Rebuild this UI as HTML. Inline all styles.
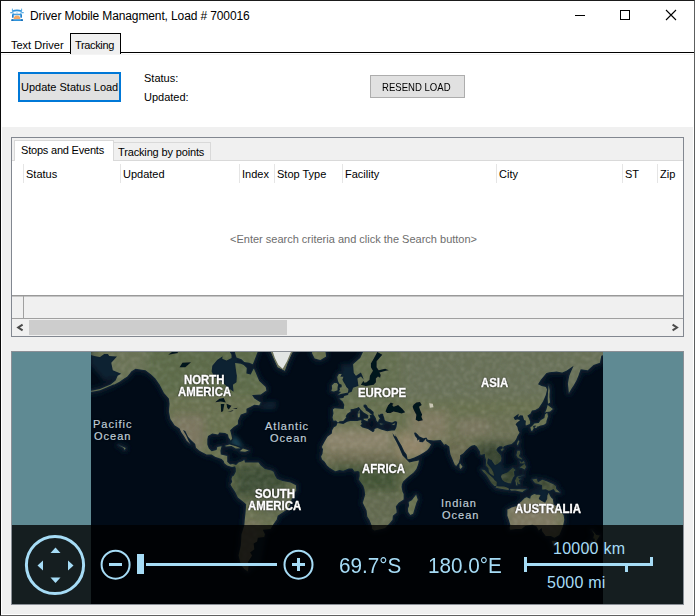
<!DOCTYPE html>
<html><head><meta charset="utf-8">
<style>
*{margin:0;padding:0;box-sizing:border-box}
html,body{width:695px;height:616px;overflow:hidden;background:#fff}
body{position:relative;font-family:"Liberation Sans",sans-serif;font-size:11px;color:#000}
.a{position:absolute}
.t{position:absolute;white-space:nowrap;line-height:1}
.lbl{position:absolute;white-space:nowrap;line-height:1;font-weight:bold;color:#fff;font-size:12px;transform:scaleX(.95);transform-origin:0 0;-webkit-text-stroke:0.35px #fff;text-shadow:0 0 2px #000,0 0 1px #000}
.ocn{position:absolute;white-space:nowrap;line-height:1;font-weight:normal;color:#bfccd8;font-size:11px;letter-spacing:1px;-webkit-text-stroke:0.2px #bfccd8;text-shadow:0 0 2px #000}
.hs{position:absolute;top:164px;width:1px;height:19px;background:#e5e5e5}
</style></head>
<body>
<!-- window frame -->
<div class="a" style="left:0;top:0;width:695px;height:616px;background:#f0f0f0;border:1px solid #1b1b1b;border-left-color:#0a0a0a;border-right-color:#5c5e5e;border-bottom-color:#606060"></div>
<div class="a" style="left:1px;top:1px;width:693px;height:126px;background:#fff"></div>
<div class="a" style="left:1px;top:614px;width:693px;height:1px;background:#fff"></div>
<div class="a" style="left:1px;top:127px;width:1px;height:487px;background:#fff"></div>
<div class="a" style="left:693px;top:127px;width:1px;height:487px;background:#fff"></div>

<!-- title bar -->
<svg class="a" style="left:6px;top:4px" width="24" height="20" viewBox="6 4 24 20">
 <path d="M12.3 11.2 Q17 9.6 21.7 11.2" fill="none" stroke="#2f93da" stroke-width="1.6"/>
 <rect x="11.9" y="8.6" width="0.9" height="2.4" fill="#4aa6e2"/>
 <rect x="21.2" y="8.6" width="0.9" height="2.4" fill="#4aa6e2"/>
 <rect x="10.2" y="12" width="2" height="1.3" rx="0.5" fill="#58ace4"/>
 <rect x="21.8" y="12" width="2" height="1.3" rx="0.5" fill="#58ace4"/>
 <path d="M12.6 11.5 L13.2 14.2 L20.8 14.2 L21.4 11.5" fill="none" stroke="#2f93da" stroke-width="0.9"/>
 <rect x="16.6" y="12" width="0.8" height="1.8" fill="#8cc8ee"/>
 <path d="M12.3 14 Q17 14.8 21.7 14 L21.7 14.9 Q17 15.7 12.3 14.9Z" fill="#2f93da"/>
 <rect x="12" y="14.5" width="1.7" height="3.3" rx="0.6" fill="#1f7fcc"/>
 <rect x="20.3" y="14.5" width="1.7" height="3.3" rx="0.6" fill="#1f7fcc"/>
 <path d="M13.6 19.3 A3.4 3.9 0 0 1 20.4 19.3Z" fill="#f2a866"/>
 <rect x="11.4" y="19.2" width="11.5" height="1.8" rx="0.6" fill="#2f93da"/>
 <rect x="11.4" y="19.2" width="2" height="1.8" rx="0.6" fill="#1a6fb8"/>
 <rect x="20.9" y="19.2" width="2" height="1.8" rx="0.6" fill="#1a6fb8"/>
</svg>
<div class="t" style="left:30px;top:10px;font-size:12px;letter-spacing:-0.12px">Driver Mobile Managment, Load # 700016</div>
<div class="a" style="left:575px;top:15px;width:10px;height:1px;background:#000"></div>
<div class="a" style="left:620px;top:10px;width:10px;height:10px;border:1px solid #000"></div>
<svg class="a" style="left:665px;top:9px" width="12" height="12"><path d="M1 1 L11 11 M11 1 L1 11" stroke="#000" stroke-width="1.1"/></svg>

<!-- outer tabs -->
<div class="a" style="left:1px;top:52px;width:693px;height:1px;background:#000"></div>
<div class="a" style="left:1px;top:54px;width:693px;height:1px;background:#f4f4f4"></div>
<div class="a" style="left:70px;top:33px;width:51px;height:21px;background:#f0f0f0;border:1px solid #000;border-bottom:none"></div>
<div class="t" style="left:11px;top:40px">Text Driver</div>
<div class="t" style="left:75px;top:40px;letter-spacing:-0.35px">Tracking</div>

<!-- top panel -->
<div class="a" style="left:18px;top:72px;width:103px;height:30px;background:#e1e1e1;border:2px solid #0078d7"></div>
<div class="t" style="left:21px;top:82px">Update Status Load</div>
<div class="t" style="left:144px;top:73px">Status:</div>
<div class="t" style="left:144px;top:92px">Updated:</div>
<div class="a" style="left:370px;top:75px;width:95px;height:23px;background:#e1e1e1;border:1px solid #adadad"></div>
<div class="t" style="left:382px;top:82px;font-size:11px;transform:scaleX(0.87);transform-origin:0 0">RESEND LOAD</div>

<!-- grid tab control -->
<div class="a" style="left:11px;top:137px;width:673px;height:200px;border:1px solid #828790;background:#f0f0f0"></div>
<div class="a" style="left:12px;top:160px;width:671px;height:136px;background:#fff;border-top:1px solid #d9d9d9"></div>
<div class="a" style="left:14px;top:140px;width:100px;height:21px;background:#fff;border:1px solid #d9d9d9;border-bottom:none"></div>
<div class="a" style="left:114px;top:142px;width:97px;height:18px;background:#f0f0f0;border:1px solid #d9d9d9;border-bottom:none;border-left:none"></div>
<div class="t" style="left:21px;top:145px;letter-spacing:-0.2px">Stops and Events</div>
<div class="t" style="left:118px;top:147px;letter-spacing:-0.15px">Tracking by points</div>
<div class="hs" style="left:23px"></div>
<div class="hs" style="left:120px"></div>
<div class="hs" style="left:239px"></div>
<div class="hs" style="left:274px"></div>
<div class="hs" style="left:342px"></div>
<div class="hs" style="left:496px"></div>
<div class="hs" style="left:622px"></div>
<div class="hs" style="left:657px"></div>
<div class="t" style="left:26px;top:169px">Status</div>
<div class="t" style="left:123px;top:169px">Updated</div>
<div class="t" style="left:242px;top:169px">Index</div>
<div class="t" style="left:277px;top:169px">Stop Type</div>
<div class="t" style="left:345px;top:169px">Facility</div>
<div class="t" style="left:499px;top:169px">City</div>
<div class="t" style="left:625px;top:169px">ST</div>
<div class="t" style="left:660px;top:169px">Zip</div>
<div class="t" style="left:230px;top:234px;color:#6d6d6d;">&lt;Enter search criteria and click the Search button&gt;</div>
<!-- footer + scrollbar -->
<div class="a" style="left:12px;top:295px;width:671px;height:1px;background:#999"></div><div class="a" style="left:12px;top:296px;width:671px;height:1px;background:#c4c4c4"></div>
<div class="a" style="left:23px;top:296px;width:1px;height:22px;background:#a0a0a0"></div>
<div class="a" style="left:12px;top:318px;width:671px;height:1px;background:#a0a0a0"></div>
<div class="a" style="left:29px;top:320px;width:258px;height:15px;background:#cdcdcd"></div>
<svg class="a" style="left:15px;top:322px" width="10" height="10"><path d="M7.6 2.6 L3.2 5.5 L7.6 8.4" fill="none" stroke="#4a4a4a" stroke-width="2"/></svg>
<svg class="a" style="left:670px;top:322px" width="10" height="10"><path d="M2.6 2.6 L7 5.5 L2.6 8.4" fill="none" stroke="#4a4a4a" stroke-width="2"/></svg>

<!-- map -->
<div class="a" style="left:11px;top:351px;width:673px;height:254px;border:1px solid #8a8f96"></div>
<svg width="695" height="616" style="position:absolute;left:0;top:0">
<defs>
<clipPath id="mc"><rect x="91" y="352" width="512" height="252"/></clipPath>
<clipPath id="lc"><path d="M107.1,279.0 L107.1,352.7 L109.2,356.1 L117.0,356.4 L111.3,362.8 L112.8,370.2 L121.3,373.8 L117.7,375.7 L115.6,380.4 L112.0,383.4 L109.9,385.2 L114.2,384.4 L119.9,381.4 L124.1,378.6 L127.0,376.8 L129.8,373.5 L131.2,371.6 L135.5,368.8 L145.5,370.2 L151.2,374.4 L155.4,378.4 L159.7,384.7 L164.0,392.9 L168.9,398.4 L169.6,403.7 L168.9,411.6 L170.4,419.0 L174.6,425.2 L179.6,428.6 L181.3,432.2 L183.9,436.0 L186.7,440.8 L190.3,443.9 L188.8,441.5 L186.0,435.2 L182.9,429.9 L185.3,431.1 L188.1,436.8 L191.0,440.0 L195.2,443.9 L196.0,447.7 L199.5,450.7 L206.6,454.4 L211.6,454.4 L215.2,456.7 L221.6,458.9 L223.7,461.0 L224.4,463.2 L227.2,465.4 L232.2,467.1 L235.8,466.1 L236.1,465.1 L232.9,463.9 L230.1,464.6 L227.2,461.8 L227.2,455.9 L220.8,454.4 L220.4,450.7 L221.6,446.2 L217.3,446.9 L216.6,450.0 L211.6,451.2 L208.8,448.5 L207.3,444.6 L207.3,439.2 L208.0,436.0 L212.3,433.6 L218.0,434.4 L219.4,432.4 L225.1,433.1 L228.0,434.4 L228.7,437.6 L230.8,440.4 L232.2,438.4 L230.8,432.7 L230.1,430.3 L233.6,426.9 L237.9,424.3 L237.9,420.8 L240.8,414.4 L246.4,412.5 L246.4,408.7 L250.7,406.7 L254.3,404.7 L259.2,405.3 L260.7,402.6 L254.3,398.4 L252.1,395.1 L260.7,394.5 L266.4,390.6 L265.6,387.1 L259.2,380.9 L254.3,369.6 L253.6,368.8 L250.7,374.4 L246.4,373.5 L246.7,367.9 L243.6,364.9 L240.8,363.7 L235.1,363.1 L235.8,368.8 L236.9,375.7 L236.5,382.2 L232.9,384.7 L233.6,391.8 L229.4,388.8 L222.3,382.2 L214.4,377.0 L211.6,371.6 L212.3,365.8 L217.3,359.7 L222.3,356.4 L223.7,351.3 L223.7,279.0Z"/><path d="M258.5,349.5 L254.3,360.6 L252.8,364.3 L249.3,362.8 L244.3,361.9 L241.5,359.3 L236.5,357.4 L235.1,353.0 L229.4,279.0 L258.5,279.0Z"/><path d="M231.5,358.0 L226.5,360.6 L222.3,358.7 L223.0,351.3 L229.4,351.3 L231.5,354.7Z"/><path d="M284.8,370.8 L277.7,367.3 L273.5,358.0 L269.9,349.5 L266.4,279.0 L317.6,279.0 L317.6,336.1 L300.5,344.0 L292.0,353.0 L287.7,362.8Z"/><path d="M311.9,353.0 L314.7,358.4 L320.4,360.0 L326.1,356.4 L325.4,351.3 L313.3,349.5Z"/><path d="M235.8,465.4 L238.6,462.5 L242.2,461.3 L244.3,459.9 L245.0,462.5 L249.3,462.5 L255.0,462.5 L258.5,462.5 L260.7,465.4 L264.9,469.0 L271.3,470.4 L273.5,471.8 L274.9,475.4 L277.0,478.9 L282.7,481.1 L290.5,482.5 L295.9,485.3 L296.2,490.4 L292.7,495.4 L290.5,502.8 L288.4,508.8 L284.8,511.1 L277.7,515.8 L276.6,519.8 L273.5,523.9 L270.6,529.0 L262.8,529.8 L264.9,534.2 L264.2,536.9 L257.8,537.8 L257.1,541.5 L253.6,543.4 L254.3,549.3 L250.0,552.4 L252.1,555.5 L247.9,562.1 L248.6,565.5 L247.9,571.6 L244.3,569.1 L240.8,564.4 L238.6,555.5 L240.8,545.4 L241.5,534.2 L244.3,525.6 L245.0,517.4 L245.7,511.1 L246.2,504.3 L243.6,502.0 L237.9,497.6 L235.1,491.8 L232.2,487.5 L230.5,484.6 L232.2,481.8 L231.5,478.9 L232.2,476.4 L233.9,475.4 L235.8,471.8 L235.8,468.2 L235.1,466.8Z"/><path d="M225.1,445.7 L229.4,444.5 L235.8,446.2 L240.6,448.2 L235.8,448.6 L231.5,445.9 L225.8,446.6Z"/><path d="M240.0,450.9 L242.9,448.6 L248.9,450.6 L245.0,451.8 L240.3,451.2Z"/><path d="M353.1,279.0 L365.9,345.9 L360.2,358.0 L353.1,364.3 L353.8,373.0 L356.0,375.7 L360.9,372.4 L362.4,375.7 L363.8,379.7 L360.9,376.5 L357.4,378.4 L358.1,383.4 L358.5,386.1 L353.1,387.8 L351.7,391.8 L348.6,392.9 L348.1,395.1 L344.3,396.0 L343.4,398.0 L339.3,398.6 L342.7,401.4 L344.3,404.7 L343.7,408.9 L334.6,408.3 L332.9,409.6 L333.5,413.5 L332.5,417.5 L333.5,420.8 L336.0,420.4 L337.5,422.2 L338.2,422.6 L339.6,421.3 L343.2,421.1 L345.3,418.6 L346.3,417.2 L345.6,416.3 L347.4,413.5 L350.6,411.6 L350.6,409.2 L353.1,408.9 L356.7,408.1 L358.8,406.9 L360.9,409.8 L363.8,412.5 L365.9,413.8 L368.3,415.3 L368.3,419.0 L368.9,419.0 L370.3,417.2 L369.6,415.3 L370.9,414.8 L372.3,415.1 L370.2,413.5 L368.8,412.3 L365.9,410.6 L365.2,408.5 L363.5,406.7 L363.6,404.7 L365.6,404.5 L366.6,405.3 L368.0,407.7 L370.9,409.6 L373.7,411.9 L373.6,414.8 L374.7,416.3 L376.0,418.5 L376.7,421.1 L378.0,421.9 L379.0,419.2 L380.1,419.0 L378.4,416.3 L378.1,414.4 L379.7,414.8 L380.8,413.7 L383.1,413.8 L383.3,415.3 L384.1,417.2 L384.7,419.9 L385.8,421.1 L389.4,422.0 L392.2,422.4 L395.1,421.1 L397.2,421.7 L396.9,424.3 L396.5,426.9 L395.6,429.1 L394.6,430.6 L395.6,433.6 L395.2,436.0 L396.5,436.8 L398.6,440.8 L401.5,445.4 L404.3,451.5 L406.6,454.4 L407.6,459.3 L410.0,459.1 L414.3,457.4 L420.0,454.7 L424.2,452.2 L427.1,450.3 L429.2,447.7 L431.0,444.6 L429.2,442.9 L426.2,440.9 L426.1,438.7 L424.9,440.0 L422.8,442.2 L419.4,441.9 L419.2,439.2 L417.4,440.8 L417.1,438.4 L415.0,436.0 L414.0,432.7 L415.7,432.4 L417.8,434.4 L419.2,436.3 L423.5,438.2 L426.4,437.4 L427.8,439.7 L433.5,440.4 L440.6,440.1 L442.7,442.8 L444.1,444.8 L445.8,444.0 L449.3,446.5 L449.7,450.0 L450.5,454.4 L452.4,459.1 L454.8,464.8 L456.2,465.9 L457.2,464.8 L458.8,462.8 L460.1,458.1 L460.1,455.2 L463.0,453.6 L466.2,450.0 L469.6,446.9 L471.9,445.4 L474.7,445.0 L476.8,446.6 L477.4,447.5 L480.0,451.5 L480.3,454.4 L481.8,454.7 L484.8,453.7 L485.0,456.7 L486.2,460.3 L485.8,465.4 L488.4,468.2 L488.9,471.8 L490.1,473.5 L493.2,475.7 L494.2,475.4 L493.1,471.8 L491.4,468.7 L488.9,465.7 L487.1,463.2 L487.7,459.6 L488.2,458.3 L489.6,459.3 L491.8,460.3 L492.5,461.8 L495.0,465.1 L497.5,463.9 L501.0,461.0 L501.4,458.1 L500.7,455.2 L497.5,451.8 L496.3,450.0 L497.5,447.7 L499.6,446.2 L502.2,446.2 L502.9,448.0 L503.9,446.2 L507.4,445.1 L511.7,443.9 L514.5,441.5 L516.1,439.2 L517.4,436.0 L519.5,432.7 L518.1,430.3 L517.4,426.9 L515.5,424.3 L517.4,422.2 L520.2,420.1 L517.4,419.5 L515.0,419.9 L513.5,417.5 L516.0,415.5 L518.8,413.8 L518.1,417.2 L520.2,415.3 L522.8,415.5 L524.1,419.9 L525.9,420.8 L525.6,424.3 L525.9,425.5 L529.8,424.0 L530.2,421.7 L528.8,418.1 L527.3,415.7 L530.5,413.5 L531.9,410.6 L535.2,410.0 L538.7,408.1 L543.0,401.6 L545.8,395.1 L547.1,389.5 L545.8,387.1 L541.6,385.9 L538.0,384.2 L540.8,379.7 L546.5,373.0 L549.4,372.2 L556.5,371.6 L562.2,372.4 L566.4,370.8 L573.6,365.8 L569.3,375.7 L567.9,383.4 L568.9,392.9 L571.4,388.8 L573.6,385.4 L576.4,380.4 L578.2,376.2 L580.7,369.3 L587.8,370.2 L593.5,364.9 L599.9,362.8 L601.3,355.7 L609.1,353.0 L619.1,351.3 L619.1,279.0Z"/><path d="M90.0,354.7 L94.3,356.1 L100.0,357.1 L104.2,354.1 L109.9,354.1 L109.9,279.0 L90.0,279.0Z"/><path d="M337.6,422.9 L343.2,424.1 L347.4,421.7 L350.3,421.1 L357.4,421.0 L360.6,420.3 L361.6,420.8 L360.9,422.6 L361.9,424.0 L360.2,425.5 L362.4,427.6 L367.8,428.9 L373.0,432.2 L374.4,431.1 L374.6,429.1 L377.3,427.9 L381.6,429.8 L387.2,431.3 L391.9,430.6 L394.6,430.6 L395.6,433.6 L394.8,436.3 L392.4,432.9 L393.6,436.8 L396.5,442.3 L398.9,446.9 L400.8,451.5 L402.5,455.5 L405.0,458.1 L407.6,460.7 L409.3,462.6 L413.6,461.5 L419.0,460.6 L418.5,462.5 L418.2,464.1 L416.4,469.0 L413.6,472.5 L410.0,475.2 L405.7,478.9 L403.2,481.5 L401.9,484.3 L401.5,486.9 L402.5,491.8 L403.6,494.0 L403.6,499.4 L398.6,502.8 L395.8,506.4 L396.5,510.5 L396.5,512.7 L392.8,515.7 L392.5,519.8 L389.9,522.9 L385.1,528.1 L381.6,529.0 L374.4,530.4 L372.2,529.1 L371.7,525.6 L369.5,520.0 L367.3,516.6 L366.6,510.4 L362.8,502.8 L365.2,494.7 L364.5,489.6 L363.4,486.0 L358.8,479.6 L359.7,476.1 L359.5,471.9 L358.1,471.1 L354.5,471.4 L352.4,468.5 L348.8,468.5 L343.2,470.8 L339.6,470.1 L335.3,471.2 L332.8,469.7 L329.6,467.7 L327.1,465.4 L324.7,461.8 L322.1,459.6 L321.1,456.4 L322.5,453.7 L323.0,449.2 L321.8,446.9 L324.7,441.5 L327.5,436.8 L331.8,433.6 L332.2,430.3 L333.9,427.2 L336.3,425.9Z"/><path d="M416.1,494.7 L417.8,499.8 L416.4,502.8 L415.0,507.3 L413.1,513.8 L410.3,515.0 L408.3,511.9 L407.9,508.8 L409.1,505.8 L408.7,502.0 L411.8,500.3 L414.3,496.9Z"/><path d="M337.9,394.9 L341.7,393.8 L348.0,392.5 L348.4,389.0 L346.3,387.1 L345.3,384.7 L343.4,381.7 L342.4,379.7 L343.4,376.8 L340.3,376.8 L341.7,374.1 L338.9,374.1 L337.2,377.0 L338.0,380.9 L339.2,383.4 L341.7,384.7 L341.7,387.3 L339.6,387.8 L340.0,389.9 L338.6,391.3 L341.0,392.0 L338.2,394.7Z"/><path d="M337.5,390.2 L337.5,387.1 L338.2,384.7 L336.8,382.9 L334.3,382.9 L331.8,385.4 L332.1,388.3 L331.4,391.1 L333.9,391.5Z"/><path d="M363.6,418.8 L368.2,418.5 L367.5,421.3 L363.8,419.7Z"/><path d="M357.7,413.5 L359.9,413.3 L359.7,417.2 L357.9,417.2Z"/><path d="M358.2,412.5 L359.5,409.6 L359.5,412.7Z"/><path d="M379.4,423.4 L383.4,424.0 L380.8,424.5Z"/><path d="M391.9,424.6 L395.2,423.3 L394.2,425.0Z"/><path d="M532.2,426.0 L534.4,423.4 L538.7,423.1 L540.6,420.3 L544.4,418.1 L545.1,414.4 L547.2,412.7 L548.0,416.3 L546.5,420.8 L546.2,423.1 L544.8,424.3 L543.0,425.0 L540.6,425.5 L538.1,426.4 L535.2,425.5 L532.3,426.2Z"/><path d="M530.5,426.9 L533.0,426.0 L533.7,428.2 L532.3,430.8 L531.2,430.8 L530.6,428.2Z"/><path d="M534.4,426.9 L537.6,425.7 L537.0,427.4 L535.2,428.1Z"/><path d="M545.1,412.5 L546.5,409.2 L547.7,404.9 L552.9,408.9 L550.1,411.6 L546.7,411.9Z"/><path d="M548.0,403.7 L550.1,402.6 L549.4,397.3 L549.7,390.6 L548.7,385.2 L548.0,392.9 L547.7,398.4Z"/><path d="M516.8,443.9 L518.1,440.4 L519.4,441.1 L517.8,445.6Z"/><path d="M500.5,449.7 L502.7,448.3 L503.9,449.1 L501.9,451.2Z"/><path d="M459.5,464.6 L460.2,463.5 L462.5,466.8 L460.6,469.1 L459.6,467.8Z"/><path d="M516.4,455.3 L517.5,450.7 L519.8,450.7 L520.2,453.0 L518.8,455.9 L522.4,458.9 L521.6,459.4 L517.8,457.7Z"/><path d="M519.5,467.5 L522.4,465.4 L524.5,463.8 L526.1,467.1 L524.5,469.5 L522.4,468.2Z"/><path d="M519.5,460.6 L521.6,462.5 L523.8,461.0 L524.9,463.2 L522.4,463.6 L520.2,463.2Z"/><path d="M501.7,474.7 L504.6,473.5 L507.4,472.5 L510.3,470.1 L512.8,467.7 L515.5,470.1 L513.8,471.4 L514.5,476.1 L513.1,477.5 L511.7,481.1 L511.0,483.2 L508.8,483.2 L504.6,481.8 L502.4,480.1 L501.0,476.8Z"/><path d="M481.5,469.5 L484.7,470.1 L488.6,474.2 L493.3,478.2 L494.6,480.3 L496.8,482.1 L496.5,485.8 L494.6,485.9 L491.5,483.2 L488.9,478.9 L486.4,475.1 L483.7,472.2Z"/><path d="M495.6,487.2 L496.8,485.9 L500.0,486.5 L503.9,486.6 L506.3,487.3 L508.8,488.5 L508.7,489.9 L503.9,489.2 L499.6,488.6 L496.0,487.8Z"/><path d="M516.0,485.3 L515.7,481.8 L515.0,481.1 L516.4,477.5 L517.4,476.4 L523.1,475.4 L523.8,475.4 L518.1,477.1 L518.8,478.8 L521.4,478.8 L518.8,480.1 L520.2,483.9 L518.5,484.2 L517.2,481.6 L517.4,485.5Z"/><path d="M532.3,479.6 L536.6,478.8 L538.0,482.2 L542.3,479.8 L546.5,481.2 L553.4,484.2 L555.8,486.0 L556.2,488.9 L560.0,492.5 L555.8,491.9 L553.6,488.9 L550.1,490.4 L548.7,490.8 L545.8,489.3 L542.3,489.5 L542.0,485.0 L535.2,483.2 L533.7,481.5Z"/><path d="M509.6,489.3 L515.2,489.2 L520.9,489.2 L526.6,489.2 L523.8,490.8 L522.4,492.1 L515.2,490.4 L511.0,490.4Z"/><path d="M507.4,509.6 L508.4,509.3 L511.7,507.6 L515.2,506.5 L518.1,505.8 L519.9,502.8 L521.6,501.3 L524.5,498.3 L526.6,497.3 L530.2,498.8 L530.9,496.1 L532.3,495.0 L534.4,494.0 L536.6,494.7 L539.4,494.7 L540.6,495.4 L539.4,496.9 L538.7,499.1 L541.6,501.0 L545.1,502.8 L547.2,499.1 L547.4,495.4 L548.7,492.8 L550.1,496.1 L551.5,498.1 L552.8,499.1 L553.6,504.3 L557.2,507.0 L560.0,510.4 L563.6,515.0 L564.3,519.8 L562.9,526.4 L559.3,535.1 L554.4,537.8 L550.8,536.0 L545.8,536.0 L542.3,531.6 L541.6,528.1 L538.7,530.4 L536.6,526.4 L532.3,524.7 L525.2,526.1 L521.6,529.0 L516.0,529.0 L510.3,529.8 L509.6,528.1 L510.3,524.7 L508.8,519.8 L507.4,515.8 L507.4,513.5Z"/><path d="M591.6,529.8 L594.2,532.4 L596.3,535.1 L599.9,535.5 L597.7,538.7 L595.6,542.5 L594.3,541.9 L594.9,538.7 L593.2,538.2 L594.2,534.2Z"/><path d="M591.6,540.6 L593.9,542.5 L592.0,546.3 L589.2,550.3 L586.4,552.6 L582.8,551.3 L584.9,547.3 L589.2,543.4Z"/><path d="M551.7,541.0 L556.9,541.3 L556.5,545.8 L553.6,546.5Z"/><path d="M114.2,382.9 L107.1,386.1 L100.0,389.0 L90.0,391.1 L90.0,392.2 L100.0,390.2 L107.1,387.3 L114.2,384.2Z"/><path d="M118.4,445.1 L125.6,448.0 L124.8,450.0 L123.4,447.7Z"/></clipPath>
<filter id="bl" x="-5%" y="-5%" width="110%" height="110%"><feGaussianBlur stdDeviation="0.6"/></filter>
<filter id="sb" x="-20%" y="-20%" width="140%" height="140%"><feGaussianBlur stdDeviation="2.5"/></filter>
<filter id="nz" x="0" y="0" width="100%" height="100%"><feTurbulence type="fractalNoise" baseFrequency="0.28" numOctaves="3" seed="7"/><feColorMatrix type="matrix" values="0 0 0 0 0.8  0 0 0 0 0.8  0 0 0 0 0.72  1.3 0 0 0 -0.6"/><feGaussianBlur stdDeviation="0.8"/></filter>
<filter id="nz2" x="0" y="0" width="100%" height="100%"><feTurbulence type="fractalNoise" baseFrequency="0.2" numOctaves="2" seed="11"/><feColorMatrix type="matrix" values="0 0 0 0 0.15  0 0 0 0 0.18  0 0 0 0 0.1  1.3 0 0 0 -0.62"/><feGaussianBlur stdDeviation="0.8"/></filter>
<filter id="bb" x="-20%" y="-20%" width="140%" height="140%"><feGaussianBlur stdDeviation="5"/></filter>
</defs>
<rect x="12" y="352" width="671" height="252" fill="#5f8a93"/>
<g clip-path="url(#mc)">
<rect x="91" y="352" width="512" height="252" fill="#010b17"/>
<g filter="url(#sb)"><g fill="#0a1b2b" stroke="#0a1b2b" stroke-width="6" stroke-linejoin="round"><path d="M107.1,279.0 L107.1,352.7 L109.2,356.1 L117.0,356.4 L111.3,362.8 L112.8,370.2 L121.3,373.8 L117.7,375.7 L115.6,380.4 L112.0,383.4 L109.9,385.2 L114.2,384.4 L119.9,381.4 L124.1,378.6 L127.0,376.8 L129.8,373.5 L131.2,371.6 L135.5,368.8 L145.5,370.2 L151.2,374.4 L155.4,378.4 L159.7,384.7 L164.0,392.9 L168.9,398.4 L169.6,403.7 L168.9,411.6 L170.4,419.0 L174.6,425.2 L179.6,428.6 L181.3,432.2 L183.9,436.0 L186.7,440.8 L190.3,443.9 L188.8,441.5 L186.0,435.2 L182.9,429.9 L185.3,431.1 L188.1,436.8 L191.0,440.0 L195.2,443.9 L196.0,447.7 L199.5,450.7 L206.6,454.4 L211.6,454.4 L215.2,456.7 L221.6,458.9 L223.7,461.0 L224.4,463.2 L227.2,465.4 L232.2,467.1 L235.8,466.1 L236.1,465.1 L232.9,463.9 L230.1,464.6 L227.2,461.8 L227.2,455.9 L220.8,454.4 L220.4,450.7 L221.6,446.2 L217.3,446.9 L216.6,450.0 L211.6,451.2 L208.8,448.5 L207.3,444.6 L207.3,439.2 L208.0,436.0 L212.3,433.6 L218.0,434.4 L219.4,432.4 L225.1,433.1 L228.0,434.4 L228.7,437.6 L230.8,440.4 L232.2,438.4 L230.8,432.7 L230.1,430.3 L233.6,426.9 L237.9,424.3 L237.9,420.8 L240.8,414.4 L246.4,412.5 L246.4,408.7 L250.7,406.7 L254.3,404.7 L259.2,405.3 L260.7,402.6 L254.3,398.4 L252.1,395.1 L260.7,394.5 L266.4,390.6 L265.6,387.1 L259.2,380.9 L254.3,369.6 L253.6,368.8 L250.7,374.4 L246.4,373.5 L246.7,367.9 L243.6,364.9 L240.8,363.7 L235.1,363.1 L235.8,368.8 L236.9,375.7 L236.5,382.2 L232.9,384.7 L233.6,391.8 L229.4,388.8 L222.3,382.2 L214.4,377.0 L211.6,371.6 L212.3,365.8 L217.3,359.7 L222.3,356.4 L223.7,351.3 L223.7,279.0Z"/><path d="M258.5,349.5 L254.3,360.6 L252.8,364.3 L249.3,362.8 L244.3,361.9 L241.5,359.3 L236.5,357.4 L235.1,353.0 L229.4,279.0 L258.5,279.0Z"/><path d="M231.5,358.0 L226.5,360.6 L222.3,358.7 L223.0,351.3 L229.4,351.3 L231.5,354.7Z"/><path d="M284.8,370.8 L277.7,367.3 L273.5,358.0 L269.9,349.5 L266.4,279.0 L317.6,279.0 L317.6,336.1 L300.5,344.0 L292.0,353.0 L287.7,362.8Z"/><path d="M311.9,353.0 L314.7,358.4 L320.4,360.0 L326.1,356.4 L325.4,351.3 L313.3,349.5Z"/><path d="M235.8,465.4 L238.6,462.5 L242.2,461.3 L244.3,459.9 L245.0,462.5 L249.3,462.5 L255.0,462.5 L258.5,462.5 L260.7,465.4 L264.9,469.0 L271.3,470.4 L273.5,471.8 L274.9,475.4 L277.0,478.9 L282.7,481.1 L290.5,482.5 L295.9,485.3 L296.2,490.4 L292.7,495.4 L290.5,502.8 L288.4,508.8 L284.8,511.1 L277.7,515.8 L276.6,519.8 L273.5,523.9 L270.6,529.0 L262.8,529.8 L264.9,534.2 L264.2,536.9 L257.8,537.8 L257.1,541.5 L253.6,543.4 L254.3,549.3 L250.0,552.4 L252.1,555.5 L247.9,562.1 L248.6,565.5 L247.9,571.6 L244.3,569.1 L240.8,564.4 L238.6,555.5 L240.8,545.4 L241.5,534.2 L244.3,525.6 L245.0,517.4 L245.7,511.1 L246.2,504.3 L243.6,502.0 L237.9,497.6 L235.1,491.8 L232.2,487.5 L230.5,484.6 L232.2,481.8 L231.5,478.9 L232.2,476.4 L233.9,475.4 L235.8,471.8 L235.8,468.2 L235.1,466.8Z"/><path d="M225.1,445.7 L229.4,444.5 L235.8,446.2 L240.6,448.2 L235.8,448.6 L231.5,445.9 L225.8,446.6Z"/><path d="M240.0,450.9 L242.9,448.6 L248.9,450.6 L245.0,451.8 L240.3,451.2Z"/><path d="M353.1,279.0 L365.9,345.9 L360.2,358.0 L353.1,364.3 L353.8,373.0 L356.0,375.7 L360.9,372.4 L362.4,375.7 L363.8,379.7 L360.9,376.5 L357.4,378.4 L358.1,383.4 L358.5,386.1 L353.1,387.8 L351.7,391.8 L348.6,392.9 L348.1,395.1 L344.3,396.0 L343.4,398.0 L339.3,398.6 L342.7,401.4 L344.3,404.7 L343.7,408.9 L334.6,408.3 L332.9,409.6 L333.5,413.5 L332.5,417.5 L333.5,420.8 L336.0,420.4 L337.5,422.2 L338.2,422.6 L339.6,421.3 L343.2,421.1 L345.3,418.6 L346.3,417.2 L345.6,416.3 L347.4,413.5 L350.6,411.6 L350.6,409.2 L353.1,408.9 L356.7,408.1 L358.8,406.9 L360.9,409.8 L363.8,412.5 L365.9,413.8 L368.3,415.3 L368.3,419.0 L368.9,419.0 L370.3,417.2 L369.6,415.3 L370.9,414.8 L372.3,415.1 L370.2,413.5 L368.8,412.3 L365.9,410.6 L365.2,408.5 L363.5,406.7 L363.6,404.7 L365.6,404.5 L366.6,405.3 L368.0,407.7 L370.9,409.6 L373.7,411.9 L373.6,414.8 L374.7,416.3 L376.0,418.5 L376.7,421.1 L378.0,421.9 L379.0,419.2 L380.1,419.0 L378.4,416.3 L378.1,414.4 L379.7,414.8 L380.8,413.7 L383.1,413.8 L383.3,415.3 L384.1,417.2 L384.7,419.9 L385.8,421.1 L389.4,422.0 L392.2,422.4 L395.1,421.1 L397.2,421.7 L396.9,424.3 L396.5,426.9 L395.6,429.1 L394.6,430.6 L395.6,433.6 L395.2,436.0 L396.5,436.8 L398.6,440.8 L401.5,445.4 L404.3,451.5 L406.6,454.4 L407.6,459.3 L410.0,459.1 L414.3,457.4 L420.0,454.7 L424.2,452.2 L427.1,450.3 L429.2,447.7 L431.0,444.6 L429.2,442.9 L426.2,440.9 L426.1,438.7 L424.9,440.0 L422.8,442.2 L419.4,441.9 L419.2,439.2 L417.4,440.8 L417.1,438.4 L415.0,436.0 L414.0,432.7 L415.7,432.4 L417.8,434.4 L419.2,436.3 L423.5,438.2 L426.4,437.4 L427.8,439.7 L433.5,440.4 L440.6,440.1 L442.7,442.8 L444.1,444.8 L445.8,444.0 L449.3,446.5 L449.7,450.0 L450.5,454.4 L452.4,459.1 L454.8,464.8 L456.2,465.9 L457.2,464.8 L458.8,462.8 L460.1,458.1 L460.1,455.2 L463.0,453.6 L466.2,450.0 L469.6,446.9 L471.9,445.4 L474.7,445.0 L476.8,446.6 L477.4,447.5 L480.0,451.5 L480.3,454.4 L481.8,454.7 L484.8,453.7 L485.0,456.7 L486.2,460.3 L485.8,465.4 L488.4,468.2 L488.9,471.8 L490.1,473.5 L493.2,475.7 L494.2,475.4 L493.1,471.8 L491.4,468.7 L488.9,465.7 L487.1,463.2 L487.7,459.6 L488.2,458.3 L489.6,459.3 L491.8,460.3 L492.5,461.8 L495.0,465.1 L497.5,463.9 L501.0,461.0 L501.4,458.1 L500.7,455.2 L497.5,451.8 L496.3,450.0 L497.5,447.7 L499.6,446.2 L502.2,446.2 L502.9,448.0 L503.9,446.2 L507.4,445.1 L511.7,443.9 L514.5,441.5 L516.1,439.2 L517.4,436.0 L519.5,432.7 L518.1,430.3 L517.4,426.9 L515.5,424.3 L517.4,422.2 L520.2,420.1 L517.4,419.5 L515.0,419.9 L513.5,417.5 L516.0,415.5 L518.8,413.8 L518.1,417.2 L520.2,415.3 L522.8,415.5 L524.1,419.9 L525.9,420.8 L525.6,424.3 L525.9,425.5 L529.8,424.0 L530.2,421.7 L528.8,418.1 L527.3,415.7 L530.5,413.5 L531.9,410.6 L535.2,410.0 L538.7,408.1 L543.0,401.6 L545.8,395.1 L547.1,389.5 L545.8,387.1 L541.6,385.9 L538.0,384.2 L540.8,379.7 L546.5,373.0 L549.4,372.2 L556.5,371.6 L562.2,372.4 L566.4,370.8 L573.6,365.8 L569.3,375.7 L567.9,383.4 L568.9,392.9 L571.4,388.8 L573.6,385.4 L576.4,380.4 L578.2,376.2 L580.7,369.3 L587.8,370.2 L593.5,364.9 L599.9,362.8 L601.3,355.7 L609.1,353.0 L619.1,351.3 L619.1,279.0Z"/><path d="M90.0,354.7 L94.3,356.1 L100.0,357.1 L104.2,354.1 L109.9,354.1 L109.9,279.0 L90.0,279.0Z"/><path d="M337.6,422.9 L343.2,424.1 L347.4,421.7 L350.3,421.1 L357.4,421.0 L360.6,420.3 L361.6,420.8 L360.9,422.6 L361.9,424.0 L360.2,425.5 L362.4,427.6 L367.8,428.9 L373.0,432.2 L374.4,431.1 L374.6,429.1 L377.3,427.9 L381.6,429.8 L387.2,431.3 L391.9,430.6 L394.6,430.6 L395.6,433.6 L394.8,436.3 L392.4,432.9 L393.6,436.8 L396.5,442.3 L398.9,446.9 L400.8,451.5 L402.5,455.5 L405.0,458.1 L407.6,460.7 L409.3,462.6 L413.6,461.5 L419.0,460.6 L418.5,462.5 L418.2,464.1 L416.4,469.0 L413.6,472.5 L410.0,475.2 L405.7,478.9 L403.2,481.5 L401.9,484.3 L401.5,486.9 L402.5,491.8 L403.6,494.0 L403.6,499.4 L398.6,502.8 L395.8,506.4 L396.5,510.5 L396.5,512.7 L392.8,515.7 L392.5,519.8 L389.9,522.9 L385.1,528.1 L381.6,529.0 L374.4,530.4 L372.2,529.1 L371.7,525.6 L369.5,520.0 L367.3,516.6 L366.6,510.4 L362.8,502.8 L365.2,494.7 L364.5,489.6 L363.4,486.0 L358.8,479.6 L359.7,476.1 L359.5,471.9 L358.1,471.1 L354.5,471.4 L352.4,468.5 L348.8,468.5 L343.2,470.8 L339.6,470.1 L335.3,471.2 L332.8,469.7 L329.6,467.7 L327.1,465.4 L324.7,461.8 L322.1,459.6 L321.1,456.4 L322.5,453.7 L323.0,449.2 L321.8,446.9 L324.7,441.5 L327.5,436.8 L331.8,433.6 L332.2,430.3 L333.9,427.2 L336.3,425.9Z"/><path d="M416.1,494.7 L417.8,499.8 L416.4,502.8 L415.0,507.3 L413.1,513.8 L410.3,515.0 L408.3,511.9 L407.9,508.8 L409.1,505.8 L408.7,502.0 L411.8,500.3 L414.3,496.9Z"/><path d="M337.9,394.9 L341.7,393.8 L348.0,392.5 L348.4,389.0 L346.3,387.1 L345.3,384.7 L343.4,381.7 L342.4,379.7 L343.4,376.8 L340.3,376.8 L341.7,374.1 L338.9,374.1 L337.2,377.0 L338.0,380.9 L339.2,383.4 L341.7,384.7 L341.7,387.3 L339.6,387.8 L340.0,389.9 L338.6,391.3 L341.0,392.0 L338.2,394.7Z"/><path d="M337.5,390.2 L337.5,387.1 L338.2,384.7 L336.8,382.9 L334.3,382.9 L331.8,385.4 L332.1,388.3 L331.4,391.1 L333.9,391.5Z"/><path d="M363.6,418.8 L368.2,418.5 L367.5,421.3 L363.8,419.7Z"/><path d="M357.7,413.5 L359.9,413.3 L359.7,417.2 L357.9,417.2Z"/><path d="M358.2,412.5 L359.5,409.6 L359.5,412.7Z"/><path d="M379.4,423.4 L383.4,424.0 L380.8,424.5Z"/><path d="M391.9,424.6 L395.2,423.3 L394.2,425.0Z"/><path d="M532.2,426.0 L534.4,423.4 L538.7,423.1 L540.6,420.3 L544.4,418.1 L545.1,414.4 L547.2,412.7 L548.0,416.3 L546.5,420.8 L546.2,423.1 L544.8,424.3 L543.0,425.0 L540.6,425.5 L538.1,426.4 L535.2,425.5 L532.3,426.2Z"/><path d="M530.5,426.9 L533.0,426.0 L533.7,428.2 L532.3,430.8 L531.2,430.8 L530.6,428.2Z"/><path d="M534.4,426.9 L537.6,425.7 L537.0,427.4 L535.2,428.1Z"/><path d="M545.1,412.5 L546.5,409.2 L547.7,404.9 L552.9,408.9 L550.1,411.6 L546.7,411.9Z"/><path d="M548.0,403.7 L550.1,402.6 L549.4,397.3 L549.7,390.6 L548.7,385.2 L548.0,392.9 L547.7,398.4Z"/><path d="M516.8,443.9 L518.1,440.4 L519.4,441.1 L517.8,445.6Z"/><path d="M500.5,449.7 L502.7,448.3 L503.9,449.1 L501.9,451.2Z"/><path d="M459.5,464.6 L460.2,463.5 L462.5,466.8 L460.6,469.1 L459.6,467.8Z"/><path d="M516.4,455.3 L517.5,450.7 L519.8,450.7 L520.2,453.0 L518.8,455.9 L522.4,458.9 L521.6,459.4 L517.8,457.7Z"/><path d="M519.5,467.5 L522.4,465.4 L524.5,463.8 L526.1,467.1 L524.5,469.5 L522.4,468.2Z"/><path d="M519.5,460.6 L521.6,462.5 L523.8,461.0 L524.9,463.2 L522.4,463.6 L520.2,463.2Z"/><path d="M501.7,474.7 L504.6,473.5 L507.4,472.5 L510.3,470.1 L512.8,467.7 L515.5,470.1 L513.8,471.4 L514.5,476.1 L513.1,477.5 L511.7,481.1 L511.0,483.2 L508.8,483.2 L504.6,481.8 L502.4,480.1 L501.0,476.8Z"/><path d="M481.5,469.5 L484.7,470.1 L488.6,474.2 L493.3,478.2 L494.6,480.3 L496.8,482.1 L496.5,485.8 L494.6,485.9 L491.5,483.2 L488.9,478.9 L486.4,475.1 L483.7,472.2Z"/><path d="M495.6,487.2 L496.8,485.9 L500.0,486.5 L503.9,486.6 L506.3,487.3 L508.8,488.5 L508.7,489.9 L503.9,489.2 L499.6,488.6 L496.0,487.8Z"/><path d="M516.0,485.3 L515.7,481.8 L515.0,481.1 L516.4,477.5 L517.4,476.4 L523.1,475.4 L523.8,475.4 L518.1,477.1 L518.8,478.8 L521.4,478.8 L518.8,480.1 L520.2,483.9 L518.5,484.2 L517.2,481.6 L517.4,485.5Z"/><path d="M532.3,479.6 L536.6,478.8 L538.0,482.2 L542.3,479.8 L546.5,481.2 L553.4,484.2 L555.8,486.0 L556.2,488.9 L560.0,492.5 L555.8,491.9 L553.6,488.9 L550.1,490.4 L548.7,490.8 L545.8,489.3 L542.3,489.5 L542.0,485.0 L535.2,483.2 L533.7,481.5Z"/><path d="M509.6,489.3 L515.2,489.2 L520.9,489.2 L526.6,489.2 L523.8,490.8 L522.4,492.1 L515.2,490.4 L511.0,490.4Z"/><path d="M507.4,509.6 L508.4,509.3 L511.7,507.6 L515.2,506.5 L518.1,505.8 L519.9,502.8 L521.6,501.3 L524.5,498.3 L526.6,497.3 L530.2,498.8 L530.9,496.1 L532.3,495.0 L534.4,494.0 L536.6,494.7 L539.4,494.7 L540.6,495.4 L539.4,496.9 L538.7,499.1 L541.6,501.0 L545.1,502.8 L547.2,499.1 L547.4,495.4 L548.7,492.8 L550.1,496.1 L551.5,498.1 L552.8,499.1 L553.6,504.3 L557.2,507.0 L560.0,510.4 L563.6,515.0 L564.3,519.8 L562.9,526.4 L559.3,535.1 L554.4,537.8 L550.8,536.0 L545.8,536.0 L542.3,531.6 L541.6,528.1 L538.7,530.4 L536.6,526.4 L532.3,524.7 L525.2,526.1 L521.6,529.0 L516.0,529.0 L510.3,529.8 L509.6,528.1 L510.3,524.7 L508.8,519.8 L507.4,515.8 L507.4,513.5Z"/><path d="M591.6,529.8 L594.2,532.4 L596.3,535.1 L599.9,535.5 L597.7,538.7 L595.6,542.5 L594.3,541.9 L594.9,538.7 L593.2,538.2 L594.2,534.2Z"/><path d="M591.6,540.6 L593.9,542.5 L592.0,546.3 L589.2,550.3 L586.4,552.6 L582.8,551.3 L584.9,547.3 L589.2,543.4Z"/><path d="M551.7,541.0 L556.9,541.3 L556.5,545.8 L553.6,546.5Z"/><path d="M114.2,382.9 L107.1,386.1 L100.0,389.0 L90.0,391.1 L90.0,392.2 L100.0,390.2 L107.1,387.3 L114.2,384.2Z"/><path d="M118.4,445.1 L125.6,448.0 L124.8,450.0 L123.4,447.7Z"/></g><path d="M486.8,457.4 L496.8,457.4 L502.4,463.2 L505.3,469.0 L512.4,467.5 L515.2,470.4 L513.8,480.3 L512.4,484.6 L508.1,488.9 L496.8,488.9 L493.9,486.0 L485.4,474.7 L485.4,466.1Z" fill="#0c2031"/><path d="M340.3,364.3 L357.4,364.3 L360.2,385.9 L351.7,392.9 L346.0,392.9 L343.2,380.9Z" fill="#0c2031"/><path d="M512.4,413.5 L525.2,415.3 L526.6,426.0 L518.1,432.7 L515.2,427.7 L513.8,420.8Z" fill="#0c2031"/><path d="M530.9,488.9 L546.5,488.9 L548.0,493.2 L546.5,502.0 L539.4,500.6 L538.0,494.7 L530.9,493.2Z" fill="#0c2031"/><path d="M90.0,351.3 L118.4,351.3 L118.4,375.7 L104.2,380.9 L90.0,364.3Z" fill="#0c2031"/><path d="M266.4,401.6 L277.7,401.6 L274.9,409.6 L260.7,409.6Z" fill="#0c2031"/><path d="M210.9,358.0 L237.9,358.0 L237.9,392.9 L210.9,392.9Z" fill="#0c2031"/><path d="M246.4,536.0 L266.4,536.0 L260.7,564.4 L249.3,571.6 L246.4,559.9Z" fill="#0c2031"/><path d="M232.2,437.6 L236.5,437.6 L242.2,445.4 L237.9,446.9 L233.6,443.9Z" fill="#1d4a5c"/></g>
<g fill="#0e2131" stroke="#0e2131" stroke-width="2.5" stroke-linejoin="round"><path d="M107.1,279.0 L107.1,352.7 L109.2,356.1 L117.0,356.4 L111.3,362.8 L112.8,370.2 L121.3,373.8 L117.7,375.7 L115.6,380.4 L112.0,383.4 L109.9,385.2 L114.2,384.4 L119.9,381.4 L124.1,378.6 L127.0,376.8 L129.8,373.5 L131.2,371.6 L135.5,368.8 L145.5,370.2 L151.2,374.4 L155.4,378.4 L159.7,384.7 L164.0,392.9 L168.9,398.4 L169.6,403.7 L168.9,411.6 L170.4,419.0 L174.6,425.2 L179.6,428.6 L181.3,432.2 L183.9,436.0 L186.7,440.8 L190.3,443.9 L188.8,441.5 L186.0,435.2 L182.9,429.9 L185.3,431.1 L188.1,436.8 L191.0,440.0 L195.2,443.9 L196.0,447.7 L199.5,450.7 L206.6,454.4 L211.6,454.4 L215.2,456.7 L221.6,458.9 L223.7,461.0 L224.4,463.2 L227.2,465.4 L232.2,467.1 L235.8,466.1 L236.1,465.1 L232.9,463.9 L230.1,464.6 L227.2,461.8 L227.2,455.9 L220.8,454.4 L220.4,450.7 L221.6,446.2 L217.3,446.9 L216.6,450.0 L211.6,451.2 L208.8,448.5 L207.3,444.6 L207.3,439.2 L208.0,436.0 L212.3,433.6 L218.0,434.4 L219.4,432.4 L225.1,433.1 L228.0,434.4 L228.7,437.6 L230.8,440.4 L232.2,438.4 L230.8,432.7 L230.1,430.3 L233.6,426.9 L237.9,424.3 L237.9,420.8 L240.8,414.4 L246.4,412.5 L246.4,408.7 L250.7,406.7 L254.3,404.7 L259.2,405.3 L260.7,402.6 L254.3,398.4 L252.1,395.1 L260.7,394.5 L266.4,390.6 L265.6,387.1 L259.2,380.9 L254.3,369.6 L253.6,368.8 L250.7,374.4 L246.4,373.5 L246.7,367.9 L243.6,364.9 L240.8,363.7 L235.1,363.1 L235.8,368.8 L236.9,375.7 L236.5,382.2 L232.9,384.7 L233.6,391.8 L229.4,388.8 L222.3,382.2 L214.4,377.0 L211.6,371.6 L212.3,365.8 L217.3,359.7 L222.3,356.4 L223.7,351.3 L223.7,279.0Z"/><path d="M258.5,349.5 L254.3,360.6 L252.8,364.3 L249.3,362.8 L244.3,361.9 L241.5,359.3 L236.5,357.4 L235.1,353.0 L229.4,279.0 L258.5,279.0Z"/><path d="M231.5,358.0 L226.5,360.6 L222.3,358.7 L223.0,351.3 L229.4,351.3 L231.5,354.7Z"/><path d="M284.8,370.8 L277.7,367.3 L273.5,358.0 L269.9,349.5 L266.4,279.0 L317.6,279.0 L317.6,336.1 L300.5,344.0 L292.0,353.0 L287.7,362.8Z"/><path d="M311.9,353.0 L314.7,358.4 L320.4,360.0 L326.1,356.4 L325.4,351.3 L313.3,349.5Z"/><path d="M235.8,465.4 L238.6,462.5 L242.2,461.3 L244.3,459.9 L245.0,462.5 L249.3,462.5 L255.0,462.5 L258.5,462.5 L260.7,465.4 L264.9,469.0 L271.3,470.4 L273.5,471.8 L274.9,475.4 L277.0,478.9 L282.7,481.1 L290.5,482.5 L295.9,485.3 L296.2,490.4 L292.7,495.4 L290.5,502.8 L288.4,508.8 L284.8,511.1 L277.7,515.8 L276.6,519.8 L273.5,523.9 L270.6,529.0 L262.8,529.8 L264.9,534.2 L264.2,536.9 L257.8,537.8 L257.1,541.5 L253.6,543.4 L254.3,549.3 L250.0,552.4 L252.1,555.5 L247.9,562.1 L248.6,565.5 L247.9,571.6 L244.3,569.1 L240.8,564.4 L238.6,555.5 L240.8,545.4 L241.5,534.2 L244.3,525.6 L245.0,517.4 L245.7,511.1 L246.2,504.3 L243.6,502.0 L237.9,497.6 L235.1,491.8 L232.2,487.5 L230.5,484.6 L232.2,481.8 L231.5,478.9 L232.2,476.4 L233.9,475.4 L235.8,471.8 L235.8,468.2 L235.1,466.8Z"/><path d="M225.1,445.7 L229.4,444.5 L235.8,446.2 L240.6,448.2 L235.8,448.6 L231.5,445.9 L225.8,446.6Z"/><path d="M240.0,450.9 L242.9,448.6 L248.9,450.6 L245.0,451.8 L240.3,451.2Z"/><path d="M353.1,279.0 L365.9,345.9 L360.2,358.0 L353.1,364.3 L353.8,373.0 L356.0,375.7 L360.9,372.4 L362.4,375.7 L363.8,379.7 L360.9,376.5 L357.4,378.4 L358.1,383.4 L358.5,386.1 L353.1,387.8 L351.7,391.8 L348.6,392.9 L348.1,395.1 L344.3,396.0 L343.4,398.0 L339.3,398.6 L342.7,401.4 L344.3,404.7 L343.7,408.9 L334.6,408.3 L332.9,409.6 L333.5,413.5 L332.5,417.5 L333.5,420.8 L336.0,420.4 L337.5,422.2 L338.2,422.6 L339.6,421.3 L343.2,421.1 L345.3,418.6 L346.3,417.2 L345.6,416.3 L347.4,413.5 L350.6,411.6 L350.6,409.2 L353.1,408.9 L356.7,408.1 L358.8,406.9 L360.9,409.8 L363.8,412.5 L365.9,413.8 L368.3,415.3 L368.3,419.0 L368.9,419.0 L370.3,417.2 L369.6,415.3 L370.9,414.8 L372.3,415.1 L370.2,413.5 L368.8,412.3 L365.9,410.6 L365.2,408.5 L363.5,406.7 L363.6,404.7 L365.6,404.5 L366.6,405.3 L368.0,407.7 L370.9,409.6 L373.7,411.9 L373.6,414.8 L374.7,416.3 L376.0,418.5 L376.7,421.1 L378.0,421.9 L379.0,419.2 L380.1,419.0 L378.4,416.3 L378.1,414.4 L379.7,414.8 L380.8,413.7 L383.1,413.8 L383.3,415.3 L384.1,417.2 L384.7,419.9 L385.8,421.1 L389.4,422.0 L392.2,422.4 L395.1,421.1 L397.2,421.7 L396.9,424.3 L396.5,426.9 L395.6,429.1 L394.6,430.6 L395.6,433.6 L395.2,436.0 L396.5,436.8 L398.6,440.8 L401.5,445.4 L404.3,451.5 L406.6,454.4 L407.6,459.3 L410.0,459.1 L414.3,457.4 L420.0,454.7 L424.2,452.2 L427.1,450.3 L429.2,447.7 L431.0,444.6 L429.2,442.9 L426.2,440.9 L426.1,438.7 L424.9,440.0 L422.8,442.2 L419.4,441.9 L419.2,439.2 L417.4,440.8 L417.1,438.4 L415.0,436.0 L414.0,432.7 L415.7,432.4 L417.8,434.4 L419.2,436.3 L423.5,438.2 L426.4,437.4 L427.8,439.7 L433.5,440.4 L440.6,440.1 L442.7,442.8 L444.1,444.8 L445.8,444.0 L449.3,446.5 L449.7,450.0 L450.5,454.4 L452.4,459.1 L454.8,464.8 L456.2,465.9 L457.2,464.8 L458.8,462.8 L460.1,458.1 L460.1,455.2 L463.0,453.6 L466.2,450.0 L469.6,446.9 L471.9,445.4 L474.7,445.0 L476.8,446.6 L477.4,447.5 L480.0,451.5 L480.3,454.4 L481.8,454.7 L484.8,453.7 L485.0,456.7 L486.2,460.3 L485.8,465.4 L488.4,468.2 L488.9,471.8 L490.1,473.5 L493.2,475.7 L494.2,475.4 L493.1,471.8 L491.4,468.7 L488.9,465.7 L487.1,463.2 L487.7,459.6 L488.2,458.3 L489.6,459.3 L491.8,460.3 L492.5,461.8 L495.0,465.1 L497.5,463.9 L501.0,461.0 L501.4,458.1 L500.7,455.2 L497.5,451.8 L496.3,450.0 L497.5,447.7 L499.6,446.2 L502.2,446.2 L502.9,448.0 L503.9,446.2 L507.4,445.1 L511.7,443.9 L514.5,441.5 L516.1,439.2 L517.4,436.0 L519.5,432.7 L518.1,430.3 L517.4,426.9 L515.5,424.3 L517.4,422.2 L520.2,420.1 L517.4,419.5 L515.0,419.9 L513.5,417.5 L516.0,415.5 L518.8,413.8 L518.1,417.2 L520.2,415.3 L522.8,415.5 L524.1,419.9 L525.9,420.8 L525.6,424.3 L525.9,425.5 L529.8,424.0 L530.2,421.7 L528.8,418.1 L527.3,415.7 L530.5,413.5 L531.9,410.6 L535.2,410.0 L538.7,408.1 L543.0,401.6 L545.8,395.1 L547.1,389.5 L545.8,387.1 L541.6,385.9 L538.0,384.2 L540.8,379.7 L546.5,373.0 L549.4,372.2 L556.5,371.6 L562.2,372.4 L566.4,370.8 L573.6,365.8 L569.3,375.7 L567.9,383.4 L568.9,392.9 L571.4,388.8 L573.6,385.4 L576.4,380.4 L578.2,376.2 L580.7,369.3 L587.8,370.2 L593.5,364.9 L599.9,362.8 L601.3,355.7 L609.1,353.0 L619.1,351.3 L619.1,279.0Z"/><path d="M90.0,354.7 L94.3,356.1 L100.0,357.1 L104.2,354.1 L109.9,354.1 L109.9,279.0 L90.0,279.0Z"/><path d="M337.6,422.9 L343.2,424.1 L347.4,421.7 L350.3,421.1 L357.4,421.0 L360.6,420.3 L361.6,420.8 L360.9,422.6 L361.9,424.0 L360.2,425.5 L362.4,427.6 L367.8,428.9 L373.0,432.2 L374.4,431.1 L374.6,429.1 L377.3,427.9 L381.6,429.8 L387.2,431.3 L391.9,430.6 L394.6,430.6 L395.6,433.6 L394.8,436.3 L392.4,432.9 L393.6,436.8 L396.5,442.3 L398.9,446.9 L400.8,451.5 L402.5,455.5 L405.0,458.1 L407.6,460.7 L409.3,462.6 L413.6,461.5 L419.0,460.6 L418.5,462.5 L418.2,464.1 L416.4,469.0 L413.6,472.5 L410.0,475.2 L405.7,478.9 L403.2,481.5 L401.9,484.3 L401.5,486.9 L402.5,491.8 L403.6,494.0 L403.6,499.4 L398.6,502.8 L395.8,506.4 L396.5,510.5 L396.5,512.7 L392.8,515.7 L392.5,519.8 L389.9,522.9 L385.1,528.1 L381.6,529.0 L374.4,530.4 L372.2,529.1 L371.7,525.6 L369.5,520.0 L367.3,516.6 L366.6,510.4 L362.8,502.8 L365.2,494.7 L364.5,489.6 L363.4,486.0 L358.8,479.6 L359.7,476.1 L359.5,471.9 L358.1,471.1 L354.5,471.4 L352.4,468.5 L348.8,468.5 L343.2,470.8 L339.6,470.1 L335.3,471.2 L332.8,469.7 L329.6,467.7 L327.1,465.4 L324.7,461.8 L322.1,459.6 L321.1,456.4 L322.5,453.7 L323.0,449.2 L321.8,446.9 L324.7,441.5 L327.5,436.8 L331.8,433.6 L332.2,430.3 L333.9,427.2 L336.3,425.9Z"/><path d="M416.1,494.7 L417.8,499.8 L416.4,502.8 L415.0,507.3 L413.1,513.8 L410.3,515.0 L408.3,511.9 L407.9,508.8 L409.1,505.8 L408.7,502.0 L411.8,500.3 L414.3,496.9Z"/><path d="M337.9,394.9 L341.7,393.8 L348.0,392.5 L348.4,389.0 L346.3,387.1 L345.3,384.7 L343.4,381.7 L342.4,379.7 L343.4,376.8 L340.3,376.8 L341.7,374.1 L338.9,374.1 L337.2,377.0 L338.0,380.9 L339.2,383.4 L341.7,384.7 L341.7,387.3 L339.6,387.8 L340.0,389.9 L338.6,391.3 L341.0,392.0 L338.2,394.7Z"/><path d="M337.5,390.2 L337.5,387.1 L338.2,384.7 L336.8,382.9 L334.3,382.9 L331.8,385.4 L332.1,388.3 L331.4,391.1 L333.9,391.5Z"/><path d="M363.6,418.8 L368.2,418.5 L367.5,421.3 L363.8,419.7Z"/><path d="M357.7,413.5 L359.9,413.3 L359.7,417.2 L357.9,417.2Z"/><path d="M358.2,412.5 L359.5,409.6 L359.5,412.7Z"/><path d="M379.4,423.4 L383.4,424.0 L380.8,424.5Z"/><path d="M391.9,424.6 L395.2,423.3 L394.2,425.0Z"/><path d="M532.2,426.0 L534.4,423.4 L538.7,423.1 L540.6,420.3 L544.4,418.1 L545.1,414.4 L547.2,412.7 L548.0,416.3 L546.5,420.8 L546.2,423.1 L544.8,424.3 L543.0,425.0 L540.6,425.5 L538.1,426.4 L535.2,425.5 L532.3,426.2Z"/><path d="M530.5,426.9 L533.0,426.0 L533.7,428.2 L532.3,430.8 L531.2,430.8 L530.6,428.2Z"/><path d="M534.4,426.9 L537.6,425.7 L537.0,427.4 L535.2,428.1Z"/><path d="M545.1,412.5 L546.5,409.2 L547.7,404.9 L552.9,408.9 L550.1,411.6 L546.7,411.9Z"/><path d="M548.0,403.7 L550.1,402.6 L549.4,397.3 L549.7,390.6 L548.7,385.2 L548.0,392.9 L547.7,398.4Z"/><path d="M516.8,443.9 L518.1,440.4 L519.4,441.1 L517.8,445.6Z"/><path d="M500.5,449.7 L502.7,448.3 L503.9,449.1 L501.9,451.2Z"/><path d="M459.5,464.6 L460.2,463.5 L462.5,466.8 L460.6,469.1 L459.6,467.8Z"/><path d="M516.4,455.3 L517.5,450.7 L519.8,450.7 L520.2,453.0 L518.8,455.9 L522.4,458.9 L521.6,459.4 L517.8,457.7Z"/><path d="M519.5,467.5 L522.4,465.4 L524.5,463.8 L526.1,467.1 L524.5,469.5 L522.4,468.2Z"/><path d="M519.5,460.6 L521.6,462.5 L523.8,461.0 L524.9,463.2 L522.4,463.6 L520.2,463.2Z"/><path d="M501.7,474.7 L504.6,473.5 L507.4,472.5 L510.3,470.1 L512.8,467.7 L515.5,470.1 L513.8,471.4 L514.5,476.1 L513.1,477.5 L511.7,481.1 L511.0,483.2 L508.8,483.2 L504.6,481.8 L502.4,480.1 L501.0,476.8Z"/><path d="M481.5,469.5 L484.7,470.1 L488.6,474.2 L493.3,478.2 L494.6,480.3 L496.8,482.1 L496.5,485.8 L494.6,485.9 L491.5,483.2 L488.9,478.9 L486.4,475.1 L483.7,472.2Z"/><path d="M495.6,487.2 L496.8,485.9 L500.0,486.5 L503.9,486.6 L506.3,487.3 L508.8,488.5 L508.7,489.9 L503.9,489.2 L499.6,488.6 L496.0,487.8Z"/><path d="M516.0,485.3 L515.7,481.8 L515.0,481.1 L516.4,477.5 L517.4,476.4 L523.1,475.4 L523.8,475.4 L518.1,477.1 L518.8,478.8 L521.4,478.8 L518.8,480.1 L520.2,483.9 L518.5,484.2 L517.2,481.6 L517.4,485.5Z"/><path d="M532.3,479.6 L536.6,478.8 L538.0,482.2 L542.3,479.8 L546.5,481.2 L553.4,484.2 L555.8,486.0 L556.2,488.9 L560.0,492.5 L555.8,491.9 L553.6,488.9 L550.1,490.4 L548.7,490.8 L545.8,489.3 L542.3,489.5 L542.0,485.0 L535.2,483.2 L533.7,481.5Z"/><path d="M509.6,489.3 L515.2,489.2 L520.9,489.2 L526.6,489.2 L523.8,490.8 L522.4,492.1 L515.2,490.4 L511.0,490.4Z"/><path d="M507.4,509.6 L508.4,509.3 L511.7,507.6 L515.2,506.5 L518.1,505.8 L519.9,502.8 L521.6,501.3 L524.5,498.3 L526.6,497.3 L530.2,498.8 L530.9,496.1 L532.3,495.0 L534.4,494.0 L536.6,494.7 L539.4,494.7 L540.6,495.4 L539.4,496.9 L538.7,499.1 L541.6,501.0 L545.1,502.8 L547.2,499.1 L547.4,495.4 L548.7,492.8 L550.1,496.1 L551.5,498.1 L552.8,499.1 L553.6,504.3 L557.2,507.0 L560.0,510.4 L563.6,515.0 L564.3,519.8 L562.9,526.4 L559.3,535.1 L554.4,537.8 L550.8,536.0 L545.8,536.0 L542.3,531.6 L541.6,528.1 L538.7,530.4 L536.6,526.4 L532.3,524.7 L525.2,526.1 L521.6,529.0 L516.0,529.0 L510.3,529.8 L509.6,528.1 L510.3,524.7 L508.8,519.8 L507.4,515.8 L507.4,513.5Z"/><path d="M591.6,529.8 L594.2,532.4 L596.3,535.1 L599.9,535.5 L597.7,538.7 L595.6,542.5 L594.3,541.9 L594.9,538.7 L593.2,538.2 L594.2,534.2Z"/><path d="M591.6,540.6 L593.9,542.5 L592.0,546.3 L589.2,550.3 L586.4,552.6 L582.8,551.3 L584.9,547.3 L589.2,543.4Z"/><path d="M551.7,541.0 L556.9,541.3 L556.5,545.8 L553.6,546.5Z"/><path d="M114.2,382.9 L107.1,386.1 L100.0,389.0 L90.0,391.1 L90.0,392.2 L100.0,390.2 L107.1,387.3 L114.2,384.2Z"/><path d="M118.4,445.1 L125.6,448.0 L124.8,450.0 L123.4,447.7Z"/></g>
<g filter="url(#bl)"><g clip-path="url(#lc)"><g filter="url(#bb)"><path d="M90.0,237.2 L630.4,237.2 L630.4,717.8 L90.0,717.8Z" fill="#67704f"/><path d="M104.2,237.2 L260.7,237.2 L260.7,395.1 L104.2,395.1Z" fill="#5c6a4a"/><path d="M104.2,327.3 L146.9,327.3 L146.9,383.4 L104.2,383.4Z" fill="#6b7256"/><path d="M172.5,415.3 L203.8,415.3 L203.8,448.5 L172.5,448.5Z" fill="#7b7660"/><path d="M232.2,463.2 L289.1,463.2 L289.1,499.1 L232.2,499.1Z" fill="#3d4d35"/><path d="M260.7,514.2 L289.1,514.2 L289.1,491.8 L260.7,491.8Z" fill="#56604a"/><path d="M237.9,522.3 L260.7,522.3 L260.7,574.1 L237.9,574.1Z" fill="#77715c"/><path d="M323.2,429.4 L391.5,429.4 L391.5,451.5 L323.2,451.5Z" fill="#8c846c"/><path d="M323.2,451.5 L402.9,451.5 L402.9,463.2 L323.2,463.2Z" fill="#6f6d52"/><path d="M331.8,463.2 L400.0,463.2 L400.0,491.8 L331.8,491.8Z" fill="#435236"/><path d="M363.1,494.7 L402.9,494.7 L402.9,532.4 L363.1,532.4Z" fill="#626950"/><path d="M397.2,432.7 L428.5,432.7 L428.5,457.4 L397.2,457.4Z" fill="#93866a"/><path d="M410.0,411.6 L448.4,411.6 L448.4,439.2 L410.0,439.2Z" fill="#807a62"/><path d="M456.9,419.0 L488.2,419.0 L488.2,436.0 L456.9,436.0Z" fill="#7a7660"/><path d="M445.6,439.2 L471.2,439.2 L471.2,466.1 L445.6,466.1Z" fill="#6b6a4f"/><path d="M476.8,442.3 L530.9,442.3 L530.9,491.8 L476.8,491.8Z" fill="#34432e"/><path d="M530.9,477.5 L566.4,477.5 L566.4,491.8 L530.9,491.8Z" fill="#34432e"/><path d="M488.2,415.3 L523.8,415.3 L523.8,442.3 L488.2,442.3Z" fill="#6c6f55"/><path d="M508.1,502.0 L559.3,502.0 L559.3,536.0 L508.1,536.0Z" fill="#7e7862"/><path d="M328.9,327.3 L402.9,327.3 L402.9,405.7 L328.9,405.7Z" fill="#636e4f"/><path d="M402.9,327.3 L616.2,327.3 L616.2,399.5 L402.9,399.5Z" fill="#687058"/></g><rect x="91" y="352" width="512" height="252" filter="url(#nz)" opacity="0.45"/><rect x="91" y="352" width="512" height="252" filter="url(#nz2)" opacity="0.5"/><path d="M284.8,370.8 L277.7,367.3 L273.5,358.0 L269.9,349.5 L266.4,279.0 L317.6,279.0 L317.6,336.1 L300.5,344.0 L292.0,353.0 L287.7,362.8Z" fill="#6d725c"/><path d="M282.7,368.8 L278.4,364.9 L274.9,358.0 L272.0,349.5 L270.6,279.0 L314.7,279.0 L314.7,336.1 L299.1,344.0 L291.2,351.3 L287.0,361.2Z" fill="#e2e5e3"/></g><path d="M429.2,403.2 L432.8,403.7 L433.5,407.3 L429.9,407.7Z" fill="#c9c6b4"/><path d="M360.9,384.7 L365.9,385.9 L373.7,384.7 L375.9,382.2 L375.9,378.4 L378.0,376.5 L380.1,377.8 L380.7,374.9 L379.4,372.4 L385.8,370.8 L388.7,370.2 L385.1,368.8 L378.7,370.2 L376.6,367.3 L376.6,361.2 L382.3,354.7 L377.3,352.0 L373.7,358.7 L370.9,363.4 L370.9,367.3 L373.0,370.8 L369.9,375.7 L369.5,379.7 L366.6,382.2 L364.5,382.7 L363.4,380.9Z" fill="#06121e"/><path d="M385.5,411.6 L386.5,408.7 L388.2,405.3 L390.8,402.4 L393.6,403.7 L392.2,404.9 L393.6,406.7 L396.5,405.7 L398.1,405.1 L400.0,406.7 L402.2,408.7 L405.2,412.3 L401.5,413.5 L397.2,412.3 L393.4,411.6 L390.5,413.1 L387.2,413.1Z" fill="#06121e"/><path d="M412.6,406.7 L413.6,404.7 L416.4,402.6 L420.0,402.0 L421.7,405.1 L419.0,406.7 L420.7,411.6 L422.1,414.4 L421.4,416.8 L422.8,420.3 L418.5,421.3 L415.7,419.7 L416.4,414.8 L415.1,412.5 L413.6,409.6Z" fill="#06121e"/><path d="M215.2,402.2 L219.4,398.8 L223.7,398.0 L225.8,402.4 L220.8,401.6Z" fill="#06121e"/><path d="M221.1,412.1 L223.0,411.2 L224.4,404.1 L220.8,404.1Z" fill="#06121e"/><path d="M226.5,403.7 L231.5,405.7 L228.7,409.6 L227.2,407.7Z" fill="#06121e"/><path d="M227.2,412.1 L233.6,410.0 L232.2,411.2Z" fill="#06121e"/><path d="M232.5,409.0 L237.6,407.7 L236.5,409.0Z" fill="#06121e"/><path d="M206.6,394.0 L208.8,394.0 L207.3,386.4 L205.2,388.3Z" fill="#06121e"/><path d="M179.6,367.3 L185.3,367.3 L191.0,362.2 L182.4,362.8Z" fill="#06121e"/><path d="M168.2,354.7 L178.2,353.0 L175.3,349.5Z" fill="#06121e"/></g>
</g>
</svg>
<div class="lbl" style="left:184px;top:373.5px">NORTH</div>
<div class="lbl" style="left:178px;top:385.5px">AMERICA</div>
<div class="ocn" style="left:93px;top:419px">Pacific</div>
<div class="ocn" style="left:94px;top:431px">Ocean</div>
<div class="ocn" style="left:265px;top:421px">Atlantic</div>
<div class="ocn" style="left:270px;top:433px">Ocean</div>
<div class="lbl" style="left:358px;top:386.7px">EUROPE</div>
<div class="lbl" style="left:481px;top:376.8px">ASIA</div>
<div class="lbl" style="left:362px;top:462.7px">AFRICA</div>
<div class="lbl" style="left:255px;top:488px">SOUTH</div>
<div class="lbl" style="left:248px;top:499.7px">AMERICA</div>
<div class="ocn" style="left:441px;top:498px">Indian</div>
<div class="ocn" style="left:442px;top:510px">Ocean</div>
<div class="lbl" style="left:515px;top:503px">AUSTRALIA</div>

<!-- overlay -->
<div class="a" style="left:12px;top:525px;width:671px;height:79px;background:rgba(0,0,0,0.78)"></div>
<svg class="a" style="left:0;top:0" width="695" height="616">
 <g fill="none" stroke="#a6dcf6">
  <circle cx="55" cy="565" r="28.6" stroke-width="3"/>
  <circle cx="115.6" cy="564.7" r="14" stroke-width="2"/>
  <circle cx="298.5" cy="564.7" r="14" stroke-width="2"/>
 </g>
 <g fill="#a6dcf6">
  <path d="M55.5 547.5 L60.5 553 L50.5 553Z"/>
  <path d="M55.5 583 L60.5 577.5 L50.5 577.5Z"/>
  <path d="M37.5 565.5 L43 560.5 L43 570.5Z"/>
  <path d="M73.5 565.5 L68 560.5 L68 570.5Z"/>
  <rect x="109" y="563" width="13" height="3"/>
  <rect x="137" y="554" width="7" height="20"/>
  <rect x="146" y="563" width="131" height="3"/>
  <rect x="292" y="563" width="13" height="3"/>
  <rect x="297" y="558" width="3" height="13"/>
  <rect x="524" y="563" width="128" height="3"/>
  <rect x="524" y="557" width="3" height="15"/>
  <rect x="650" y="557" width="3" height="9"/>
  <rect x="625" y="563" width="3" height="9"/>
 </g>
</svg>
<div class="t" style="left:339px;top:555px;font-size:22.5px;color:#a6dcf6;transform:scaleX(0.92);transform-origin:0 0">69.7°S</div>
<div class="t" style="left:428px;top:555px;font-size:22.5px;color:#a6dcf6;transform:scaleX(0.92);transform-origin:0 0">180.0°E</div>
<div class="t" style="left:553px;top:541px;font-size:16px;letter-spacing:0.25px;color:#a6dcf6;transform:scaleX(1);transform-origin:0 0">10000 km</div>
<div class="t" style="left:547px;top:575px;font-size:16px;letter-spacing:0.25px;color:#a6dcf6;transform:scaleX(1);transform-origin:0 0">5000 mi</div>
</body></html>
